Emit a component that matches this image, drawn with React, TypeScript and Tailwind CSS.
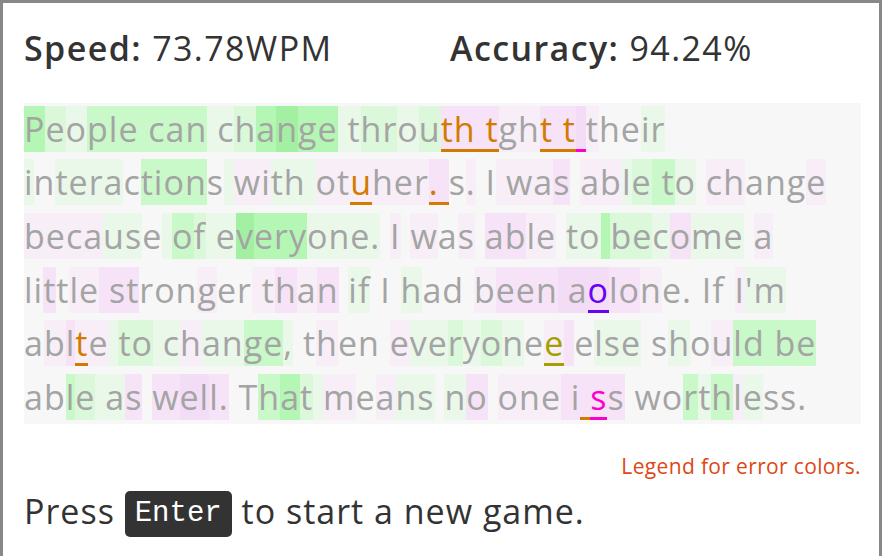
type Seg = [string, string?, string?];

const BG: Record<string, string> = {
  g1: "bg-[#eaf8ea]",
  g2: "bg-[#dbf8db]",
  g3: "bg-[#c9f8c9]",
  g4: "bg-[#b4f7b4]",
  g5: "bg-[#a3f0a3]",
  p1: "bg-[#f7eef7]",
  p2: "bg-[#f7e3f7]",
  p3: "bg-[#f3dcf6]",
};

// error colours, underline drawn as an inset shadow at the bottom of the char box
const FG: Record<string, string> = {
  o: "text-[#d47a00] shadow-[inset_0_-3px_0_#d47a00]",
  m: "text-[#ff00cc] shadow-[inset_0_-3px_0_#ff00cc]",
  u: "text-[#6a00f4] shadow-[inset_0_-3px_0_#6a00f4]",
  y: "text-[#a5a000] shadow-[inset_0_-3px_0_#a5a000]",
};

const lines: Seg[][] = [
  [
    ["P", "g4"], ["e", "g2"], ["o", "g1"], ["ple can", "g3"], [" c", "g1"], ["h", "g2"], ["a", "g4"], ["n", "g5"],
    ["ge", "g4"], [" t", "g1"], ["hr", "g2"], ["o", "g1"], ["u", "g2"], ["th t", "p2", "o"], ["gh", "p1"],
    ["t t", "p2", "o"], [" ", "p3", "m"], ["t", "p1"], ["he"], ["ir", "g1"],
  ],
  [
    ["i", "g1"], ["n"], ["tera", "g1"], ["c"], ["tion", "g3"], ["s"], [" ", "g1"], ["wi", "p1"], ["th", "g1"],
    [" ", "g1"], ["ot", "p1"], ["u", "p1", "o"], ["her", "p1"], [". ", "p2", "o"], ["s"], [".", "p1"], [" I"],
    [" wa", "p1"], ["s", "p2"], [" "], ["ab", "p1"], ["l", "g1"], ["e", "g2"], [" t", "g3"], ["o", "g1"], [" "],
    ["ch", "p1"], ["ang"], ["e", "p1"],
  ],
  [
    ["beca", "p1"], ["us", "g1"], ["e"], [" ", "g1"], ["o", "g3"], ["f", "g2"], [" ", "g1"], ["e", "g1"], ["v", "g5"],
    ["e", "g4"], ["ry", "g4"], ["one.", "g1"], [" "], ["I", "p1"], [" "], ["w", "p1"], ["a"], ["s", "p1"], [" "],
    ["ab", "p2"], ["le", "p1"], [" "], ["to", "g1"], [" ", "g4"], ["be", "g2"], ["c", "g1"], ["o", "p2"], ["me", "g1"],
    [" "], ["a", "p1"],
  ],
  [
    ["li"], ["t", "p2"], ["t"], ["le", "p1"], [" st", "p2"], ["ron"], ["g", "p1"], ["er"], [" t", "p1"], ["h", "p2"],
    ["a", "p1"], ["n", "p2"], [" "], ["if", "g1"], [" I "], ["h", "g1"], ["ad"], [" "], ["b", "p1"], ["een", "p2"],
    [" a", "p3"], ["o", "p3", "u"], ["lo", "p2"], ["n", "p1"], ["e. If "], ["I", "p1"], ["'m", "g1"],
  ],
  [
    ["a"], ["b", "p1"], ["l", "p2"], ["t", "p1", "o"], ["e", "p1"], [" ", "g1"], ["to", "g2"], [" c", "g1"], ["h", "p1"],
    ["an", "g1"], ["g", "g3"], ["e", "g3"], [",", "g1"], [" t"], ["h", "p1"], ["en "], ["e", "p1"], ["ve", "g1"],
    ["r", "g2"], ["y", "g1"], ["o", "g2"], ["n", "g1"], ["e"], ["e", "p1", "y"], [" ", "p2"], ["e"], ["lse", "g1"],
    [" s"], ["h", "g1"], ["o"], ["u", "p1"], ["ld be", "g3"],
  ],
  [
    ["ab"], ["l", "g3"], ["e", "g2"], [" a", "g1"], ["s", "p2"], [" "], ["w", "p2"], ["el", "p3"], ["l.", "p2"], [" T"],
    ["h", "g3"], ["a", "g4"], ["t", "g2"], [" ", "g1"], ["m", "p1"], ["e"], ["a", "p1"], ["ns", "g1"], [" "],
    ["n", "g1"], ["o", "p2"], [" "], ["one", "p1"], [" i", "p2"], [" ", "p2", "o"], ["s", "p2", "m"], ["s", "p2"],
    [" wo"], ["r", "g3"], ["t", "g1"], ["h", "g3"], ["l", "p1"], ["e", "g1"], ["ss."],
  ],
];

function Passage() {
  return (
    <div className="bg-[#f7f7f7] text-[34px] leading-[53.6px] tracking-[1px] text-[#a4a4a4]">
      {lines.map((line, i) => (
        <div key={i} className="whitespace-pre">
          {line.map(([text, bg, fg], j) => (
            <span key={j} className={`${bg ? BG[bg] : ""} ${fg ? FG[fg] : ""}`}>
              {text}
            </span>
          ))}
        </div>
      ))}
    </div>
  );
}

export default function App() {
  return (
    <div className="w-[882px] min-h-[600px] border-[3px] border-[#888888] bg-white pl-[21px] pr-[18px] pt-[25px] font-['Open_Sans',sans-serif]">
      {/* Stats */}
      <div className="flex text-[34px] leading-[1.2] tracking-[1.4px] text-[#333333]">
        <div className="w-[426px]">
          <span className="font-semibold">Speed:</span> 73.78WPM
        </div>
        <div>
          <span className="font-semibold">Accuracy:</span> 94.24%
        </div>
      </div>

      <div className="mt-[34px]">
        <Passage />
      </div>

      <div className="mt-[30px] text-right text-[21px] leading-[1.2] tracking-[0.35px] text-[#dd4814]">
        Legend for error colors.
      </div>

      <div className="mt-[11px] text-[34px] leading-[1.2] tracking-[1px] text-[#333333]">
        Press{" "}
        <kbd className="inline-block h-[46px] rounded-[5px] bg-[#333333] px-[10px] align-top font-['Liberation_Mono',monospace] text-[29px] leading-[46px] tracking-normal text-white">
          Enter
        </kbd>{" "}
        to start a new game.
      </div>
    </div>
  );
}
